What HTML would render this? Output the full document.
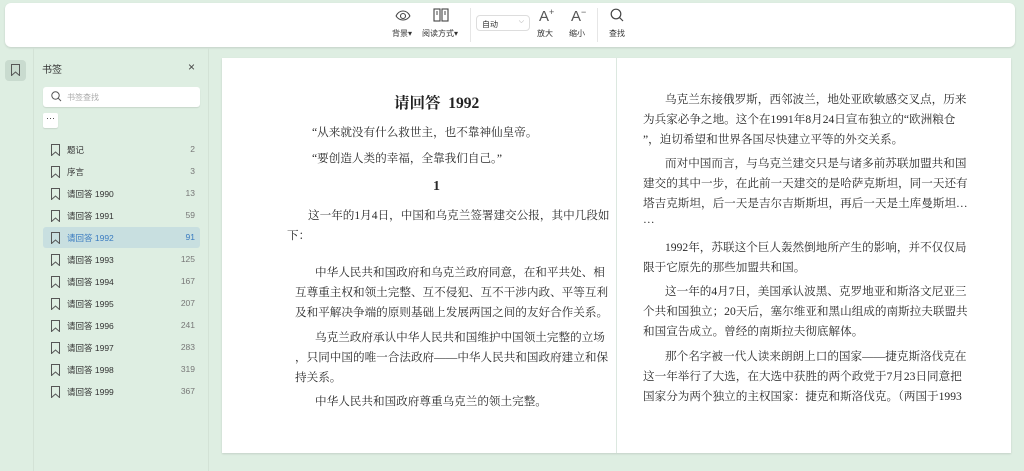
<!DOCTYPE html>
<html><head><meta charset="utf-8"><style>
*{margin:0;padding:0;box-sizing:border-box}
body{width:1024px;height:471px;overflow:hidden;background:#deeee2;font-family:"Liberation Sans","Noto Sans CJK SC",sans-serif;position:relative;color:#333}
.tb{position:absolute;left:5px;top:3px;width:1010px;height:44px;background:#fff;border-radius:6px;box-shadow:0 1px 2px rgba(0,0,0,.12)}
.ti{position:absolute;font-size:8px;color:#333;text-align:center}
.sep{position:absolute;top:5px;width:1px;height:34px;background:#e6e6e6}
.side{position:absolute;left:33px;top:48px;width:176px;height:423px;border-left:1px solid #d3e2d6;border-right:1px solid #d3e2d6}
.it{position:absolute;left:43px;width:157px;height:21px;font-size:8.5px;color:#333;border-radius:3px}
.it svg{position:absolute;left:8px;top:5px}
.it .n{position:absolute;left:24px;top:5px}
.it .c{position:absolute;right:5px;top:5px;color:#777}
.page{position:absolute;left:222px;top:58px;width:789px;height:395px;background:#fff;box-shadow:0 1px 2px rgba(0,0,0,.12)}
.l{position:absolute;white-space:nowrap;font-family:"Liberation Serif","Noto Serif CJK SC",serif;font-size:11.6px;color:#2a2a2a}
</style></head><body>
<div class="tb">
 <svg style="position:absolute;left:390px;top:6px" width="16" height="14" viewBox="0 0 16 14" fill="none" stroke="#444" stroke-width="1.1"><path d="M1 7C3 3 6 2 8 2s5 1 7 5"/><path d="M1 7c2 3 5 4 7 4s5-1 7-4"/><circle cx="8" cy="7" r="2.5"/></svg>
 <div class="ti" style="left:387px;top:25px">背景▾</div>
 <svg style="position:absolute;left:428px;top:5px" width="16" height="14" viewBox="0 0 16 14" fill="none" stroke="#444" stroke-width="1.1"><rect x="1" y="1" width="6" height="12"/><rect x="9" y="1" width="6" height="12"/><path d="M3 4h2M3 6h2M11 4h2M11 6h2"/></svg>
 <div class="ti" style="left:417px;top:25px">阅读方式▾</div>
 <div class="sep" style="left:465px"></div>
 <div style="position:absolute;left:471px;top:12px;width:54px;height:16px;border:1px solid #ddd;border-radius:4px;font-size:8px;padding:3px 0 0 5px">自动<span style="position:absolute;right:5px;top:2px;color:#999;font-size:7px">⌵</span></div>
 <div style="position:absolute;left:534px;top:4px;font-size:15px;color:#555">A<sup style="font-size:9px;color:#555">+</sup></div>
 <div class="ti" style="left:532px;top:25px">放大</div>
 <div style="position:absolute;left:566px;top:4px;font-size:15px;color:#555">A<sup style="font-size:9px">−</sup></div>
 <div class="ti" style="left:564px;top:25px">缩小</div>
 <div class="sep" style="left:592px"></div>
 <svg style="position:absolute;left:605px;top:5px" width="14" height="14" viewBox="0 0 14 14" fill="none" stroke="#444" stroke-width="1.2"><circle cx="6" cy="6" r="4.8"/><path d="M9.5 9.5l3.5 3.5"/></svg>
 <div class="ti" style="left:604px;top:25px">查找</div>
</div>
<div style="position:absolute;left:5px;top:60px;width:21px;height:21px;background:#c9dbcf;border-radius:4px"><svg style="position:absolute;left:6px;top:4px" width="9" height="12" viewBox="0 0 9 12" fill="none" stroke="#555"><path d="M.5.5h8v11L4.5 8 .5 11.5z"/></svg></div>
<div class="side"></div>
<div style="position:absolute;left:42px;top:61px;font-size:10px;color:#333">书签</div>
<div style="position:absolute;left:188px;top:60px;font-size:12px;color:#444">×</div>
<div style="position:absolute;left:43px;top:87px;width:157px;height:20px;background:#fff;border-radius:3px;box-shadow:0 1px 1px rgba(0,0,0,.1)"><svg style="position:absolute;left:8px;top:4px" width="11" height="11" viewBox="0 0 11 11" fill="none" stroke="#555"><circle cx="4.5" cy="4.5" r="3.7"/><path d="M7.3 7.3L10 10"/></svg><span style="position:absolute;left:24px;top:5px;font-size:8px;color:#aaa">书签查找</span></div>
<div style="position:absolute;left:43px;top:113px;width:15px;height:15px;background:#fff;border-radius:2px;font-size:9px;text-align:center;line-height:11px;box-shadow:0 1px 1px rgba(0,0,0,.1)">···</div>
<div id="list"></div>
<div class="page">
 <div style="position:absolute;left:394px;top:0;width:1px;height:395px;background:#dce8e0"></div>
</div>
<div class="l" style="left:394px;top:91px;font-size:15.5px;font-weight:bold;color:#222">请回答&nbsp;&nbsp;1992</div>
<div class="l" style="left:312px;top:124px">“从来就没有什么救世主，也不靠神仙皇帝。</div>
<div class="l" style="left:312px;top:150px">“要创造人类的幸福，全靠我们自己。”</div>
<div class="l" style="left:433px;top:179px;font-size:14px;font-weight:bold">1</div>
<div class="l" style="left:308px;top:207px">这一年的1月4日，中国和乌克兰签署建交公报，其中几段如</div>
<div class="l" style="left:287px;top:227px">下：</div>
<div class="l" style="left:315px;top:264px">中华人民共和国政府和乌克兰政府同意，在和平共处、相</div>
<div class="l" style="left:295px;top:284px">互尊重主权和领土完整、互不侵犯、互不干涉内政、平等互利</div>
<div class="l" style="left:295px;top:304px">及和平解决争端的原则基础上发展两国之间的友好合作关系。</div>
<div class="l" style="left:315px;top:329px">乌克兰政府承认中华人民共和国维护中国领土完整的立场</div>
<div class="l" style="left:295px;top:349px">，只同中国的唯一合法政府——中华人民共和国政府建立和保</div>
<div class="l" style="left:295px;top:369px">持关系。</div>
<div class="l" style="left:315px;top:393px">中华人民共和国政府尊重乌克兰的领土完整。</div>

<div class="l" style="left:665px;top:91px">乌克兰东接俄罗斯，西邻波兰，地处亚欧敏感交叉点，历来</div>
<div class="l" style="left:643px;top:111px">为兵家必争之地。这个在1991年8月24日宣布独立的“欧洲粮仓</div>
<div class="l" style="left:643px;top:131px">”，迫切希望和世界各国尽快建立平等的外交关系。</div>
<div class="l" style="left:665px;top:155px">而对中国而言，与乌克兰建交只是与诸多前苏联加盟共和国</div>
<div class="l" style="left:643px;top:175px">建交的其中一步，在此前一天建交的是哈萨克斯坦，同一天还有</div>
<div class="l" style="left:643px;top:195px">塔吉克斯坦，后一天是吉尔吉斯斯坦，再后一天是土库曼斯坦…</div>
<div class="l" style="left:643px;top:213px">…</div>
<div class="l" style="left:665px;top:239px">1992年，苏联这个巨人轰然倒地所产生的影响，并不仅仅局</div>
<div class="l" style="left:643px;top:259px">限于它原先的那些加盟共和国。</div>
<div class="l" style="left:665px;top:283px">这一年的4月7日，美国承认波黑、克罗地亚和斯洛文尼亚三</div>
<div class="l" style="left:643px;top:303px">个共和国独立；20天后，塞尔维亚和黑山组成的南斯拉夫联盟共</div>
<div class="l" style="left:643px;top:323px">和国宣告成立。曾经的南斯拉夫彻底解体。</div>
<div class="l" style="left:665px;top:348px">那个名字被一代人读来朗朗上口的国家——捷克斯洛伐克在</div>
<div class="l" style="left:643px;top:368px">这一年举行了大选，在大选中获胜的两个政党于7月23日同意把</div>
<div class="l" style="left:643px;top:388px">国家分为两个独立的主权国家：捷克和斯洛伐克。（两国于1993</div>
<script>
var d=[["题记",2],["序言",3],["请回答 1990",13],["请回答 1991",59],["请回答 1992",91],["请回答 1993",125],["请回答 1994",167],["请回答 1995",207],["请回答 1996",241],["请回答 1997",283],["请回答 1998",319],["请回答 1999",367]];
var h="";d.forEach(function(x,i){var sel=i==4;h+='<div class="it" style="top:'+(139+i*22)+'px;'+(sel?'background:#c8dfe0;color:#3a7bc0':'')+'"><svg width="9" height="12" viewBox="0 0 9 12" fill="none" stroke="#555"><path d="M.5.5h8v11L4.5 8 .5 11.5z"/></svg><span class="n">'+x[0]+'</span><span class="c"'+(sel?' style="color:#3a7bc0"':'')+'>'+x[1]+'</span></div>'});
document.getElementById("list").innerHTML=h;
</script>
</body></html>
